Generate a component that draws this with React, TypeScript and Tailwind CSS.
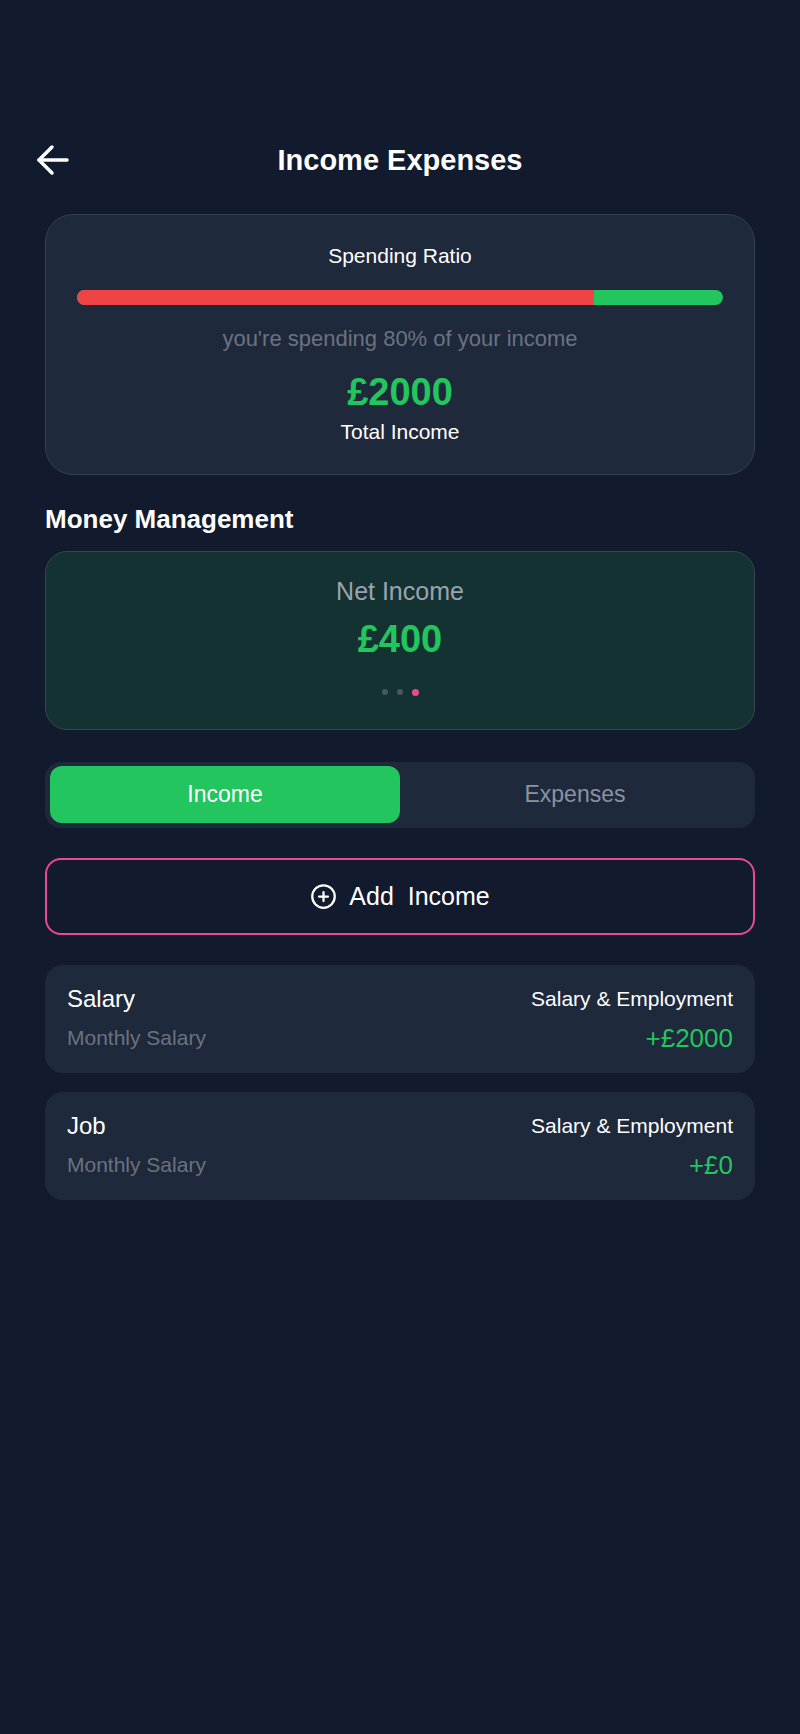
import React from 'react';
import { CirclePlus } from 'lucide-react';

const font = { fontFamily: '"Liberation Sans", Arial, sans-serif' };

type Entry = { name: string; note: string; category: string; amount: string };

const entries: Entry[] = [
  { name: 'Salary', note: 'Monthly Salary', category: 'Salary & Employment', amount: '+£2000' },
  { name: 'Job', note: 'Monthly Salary', category: 'Salary & Employment', amount: '+£0' },
];

const EntryCard: React.FC<{ entry: Entry }> = ({ entry }) => (
  <div className="h-[108px] rounded-[18px] bg-[#1e293b] px-[22px] pt-[19px] pb-[21px]">
    <div className="flex items-center justify-between">
      <span className="text-[24px] leading-[30px] text-white">{entry.name}</span>
      <span className="text-[21px] leading-[26px] text-white">{entry.category}</span>
    </div>
    <div className="mt-[10px] flex items-center justify-between">
      <span className="text-[21px] leading-[28px] text-[#6b7280]">{entry.note}</span>
      <span className="text-[26px] leading-[28px] text-[#22c55e]">{entry.amount}</span>
    </div>
  </div>
);

const App: React.FC = () => {
  const spent = 80;

  return (
    <div className="min-h-screen bg-[#121a2d] pb-10" style={font}>
      {/* Header */}
      <header className="grid grid-cols-[1fr_auto_1fr] items-center px-[35px] pt-[144px]">
        <svg width="34" height="32" viewBox="0 0 34 32" fill="none" stroke="white" strokeWidth="3.5" strokeLinecap="round" strokeLinejoin="round">
          <path d="M32 16H4" />
          <path d="M17 3 4 16l13 13" />
        </svg>
        <h1 className="text-[29px] font-bold leading-[32px] text-white">Income Expenses</h1>
        <div />
      </header>

      <main className="px-[45px]">
        {/* Spending ratio */}
        <section className="mt-[38px] rounded-[28px] border border-[#334155] bg-[#1e293b] px-[31px] pt-[29px] pb-[30px] text-center">
          <p className="text-[21px] leading-[24px] text-white">Spending Ratio</p>
          <div className="mt-[22px] flex h-[15px] overflow-hidden rounded-full bg-[#22c55e]">
            <div className="h-full bg-[#ef4444]" style={{ width: `${spent}%` }} />
          </div>
          <p className="mt-[22px] text-[22px] leading-[24px] text-[#6b7280]">you're spending 80% of your income</p>
          <p className="mt-[19px] text-[38px] font-bold leading-[44px] text-[#22c55e]">£2000</p>
          <p className="mt-[6px] text-[21px] leading-[24px] text-white">Total Income</p>
        </section>

        <h2 className="mt-[29px] text-[26px] font-bold leading-[30px] text-white">Money Management</h2>

        {/* Net income */}
        <section className="mt-[17px] rounded-[22px] border border-[#3a4552] bg-[#143231] pt-[25px] pb-[34px] text-center">
          <p className="text-[25px] leading-[28px] text-[#9ca3af]">Net Income</p>
          <p className="mt-[12px] text-[38px] font-bold leading-[44px] text-[#22c55e]">£400</p>
          <div className="mt-[28px] flex h-[6px] items-center justify-center gap-[9px]">
            <span className="h-[6px] w-[6px] rounded-full bg-[#4b5563]" />
            <span className="h-[6px] w-[6px] rounded-full bg-[#4b5563]" />
            <span className="h-[7px] w-[7px] rounded-full bg-[#ec4899]" />
          </div>
        </section>

        {/* Tabs */}
        <div className="mt-[32px] flex h-[66px] rounded-[16px] bg-[#1e293b] px-[5px] pt-[4px] pb-[5px]">
          <button className="flex-1 rounded-[12px] bg-[#22c55e] text-[23px] text-white">Income</button>
          <button className="flex-1 text-[23px] text-[#8b93a1]">Expenses</button>
        </div>

        {/* Add */}
        <button className="mt-[30px] flex h-[77px] w-full items-center justify-center gap-[12px] rounded-[16px] border-2 border-[#ec4899] text-white">
          <CirclePlus size={27} strokeWidth={2} />
          <span className="whitespace-pre text-[25px]">Add  Income</span>
        </button>

        {/* Entries */}
        <div className="mt-[30px] flex flex-col gap-[19px]">
          {entries.map((e) => (
            <EntryCard key={e.name} entry={e} />
          ))}
        </div>
      </main>
    </div>
  );
};

export default App;
